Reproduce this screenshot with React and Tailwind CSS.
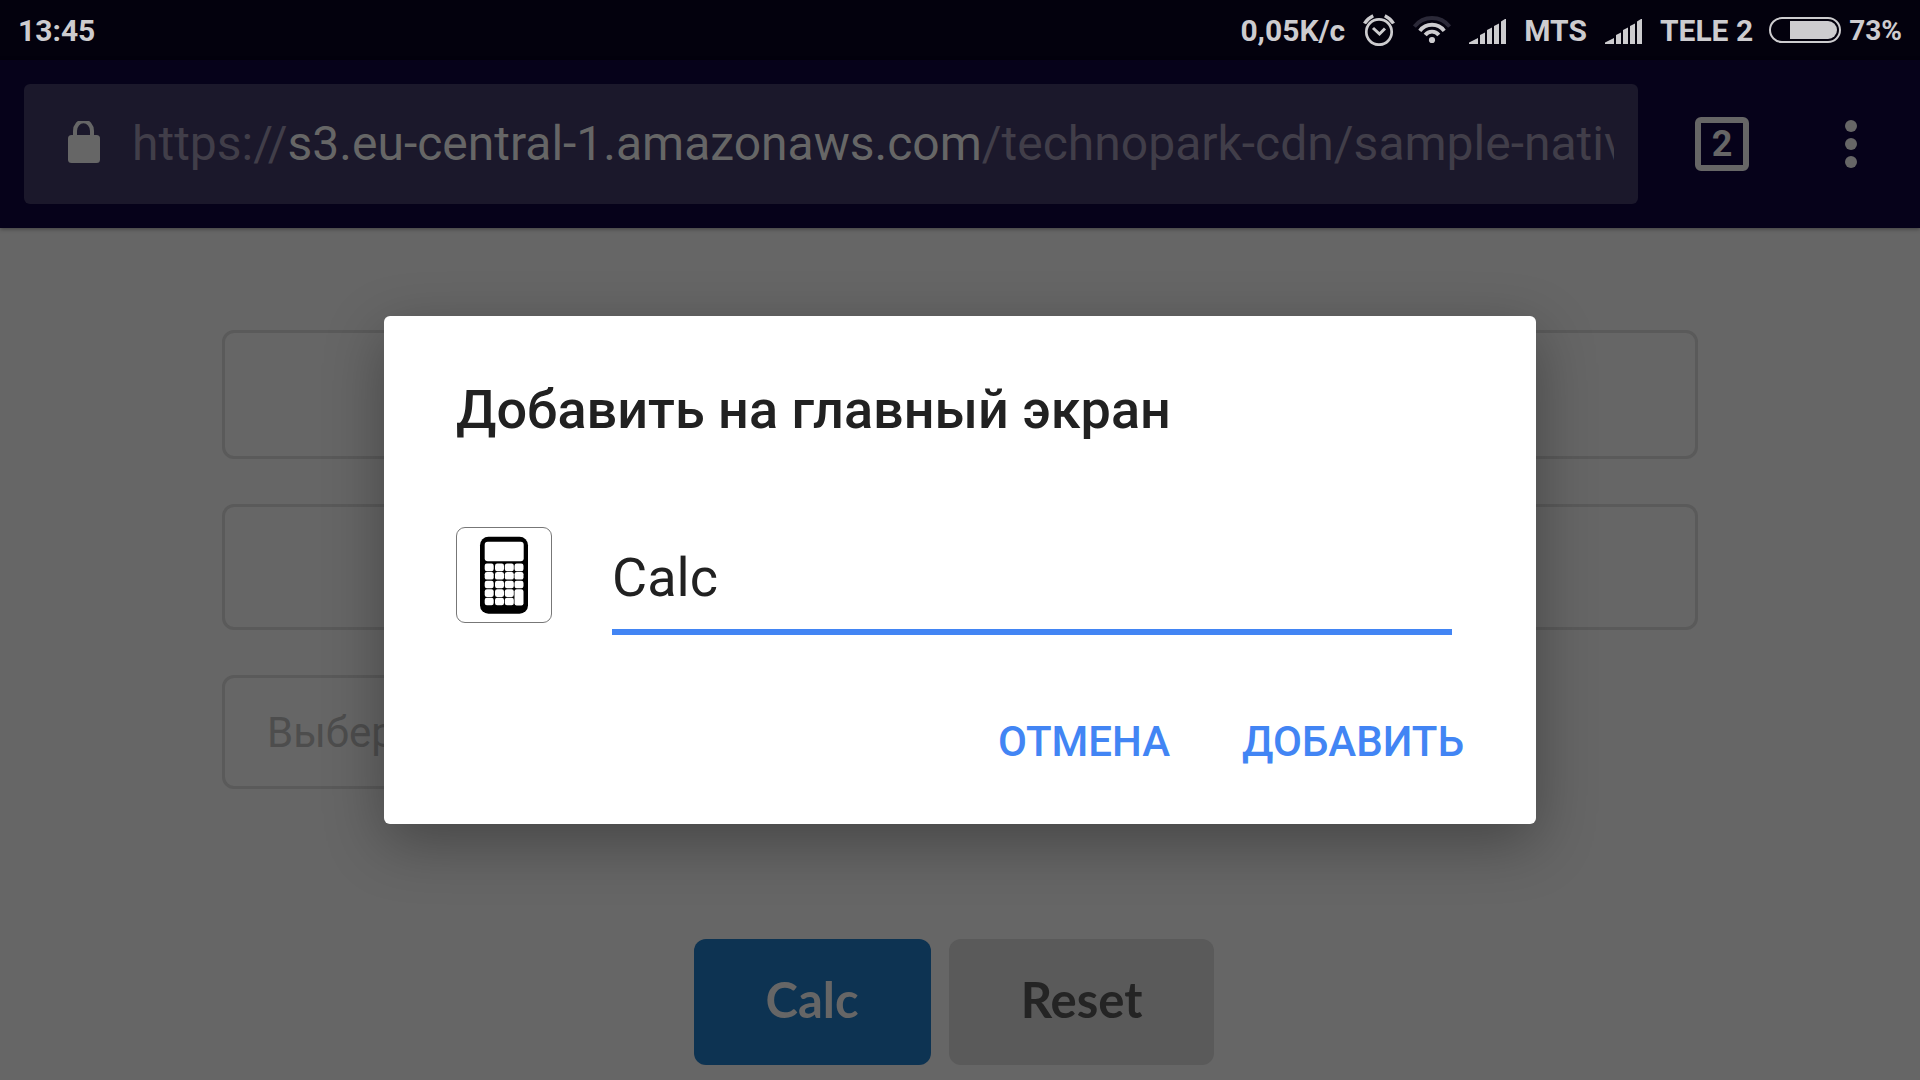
import React from 'react';

function AlarmIcon() {
  return (
    <svg className="h-8 w-8" viewBox="0 0 32 32" fill="none" stroke="#cdcccf" aria-hidden="true">
      <circle cx="16" cy="18" r="12.7" strokeWidth="2.7" />
      <path d="M10 14 16.5 20 22 14.5" strokeWidth="3" />
      <path d="M1.5 9.5Q4.5 4.5 10.2 1.7M30.5 9.5Q27.5 4.5 21.8 1.7" strokeWidth="3.4" />
    </svg>
  );
}

function WifiIcon() {
  return (
    <svg className="h-7 w-[38px]" viewBox="0 0 38 28" fill="none" strokeWidth="3.8" aria-hidden="true">
      <path d="M1.4 10.6A22.3 22.3 0 0 1 36.6 10.6" stroke="#2b2938" />
      <path d="M6.8 14.8A15.3 15.3 0 0 1 31.2 14.8" stroke="#cdcccf" />
      <path d="M12.2 19A8.6 8.6 0 0 1 25.8 19" stroke="#cdcccf" />
      <circle cx="19" cy="24" r="3.1" fill="#cdcccf" />
    </svg>
  );
}

function SignalIcon() {
  return (
    <svg className="h-[25px] w-[37px]" viewBox="0 0 37 25" fill="#cdcccf" aria-hidden="true">
      <path d="M0 25V23.5L9 19V25ZM11 25V16L16 13.5V25ZM18 25V11L23 8.5V25ZM25 25V7L30 4.5V25ZM32 25V2.5L36 0H37V25Z" />
    </svg>
  );
}

function BatteryIcon() {
  return (
    <svg className="h-[26px] w-[72px]" viewBox="0 0 72 26" aria-hidden="true">
      <rect x="1" y="1" width="70" height="24" rx="12" fill="none" stroke="#cdcccf" strokeWidth="2" />
      <path d="M21 4H59A9 9 0 0 1 59 22H21Z" fill="#cdcccf" />
    </svg>
  );
}

function LockIcon() {
  return (
    <svg className="mb-1 h-[42px] w-8 shrink-0" viewBox="0 0 32 42" aria-hidden="true">
      <rect x="0" y="14" width="32" height="28" rx="3.5" fill="#666" />
      <path d="M7 15V10A7 8 0 0 1 24 10V15" fill="none" stroke="#666" strokeWidth="4" />
    </svg>
  );
}

const keyColumns = [28.7, 39, 48.8, 58.5];
const keyRows = [36.6, 45, 53.7, 62.3, 70.7];

function CalculatorIcon() {
  return (
    <svg className="size-24 shrink-0" viewBox="0 0 96 96" aria-hidden="true">
      <rect x="0.5" y="0.5" width="95" height="95" rx="8.5" fill="#fff" stroke="#777" />
      <rect x="24" y="9.7" width="48" height="77" rx="8.5" />
      <rect x="28.7" y="14.7" width="39" height="19.6" rx="3" fill="#fff" />
      {keyRows.map((y, row) =>
        keyColumns.map((x, column) => {
          if (column === 3 && row === 4) return null;
          const tall = column === 3 && row === 3;
          return (
            <rect key={`${row}-${column}`} x={x} y={y} width="9" height={tall ? 16.2 : 7.6} rx="2.2" fill="#fff" />
          );
        })
      )}
    </svg>
  );
}

function StatusBar() {
  return (
    <header className="flex h-[60px] items-center justify-between bg-[#03010d] px-[18px] pt-0.5 text-[30px] leading-9 font-bold text-[#cdcccf]">
      <time>13:45</time>
      <div className="flex items-center">
        <span>0,05K/c</span>
        <span className="ml-[18px] flex pb-0.5"><AlarmIcon /></span>
        <span className="ml-[18px] flex pb-0.5"><WifiIcon /></span>
        <span className="ml-[18px] flex"><SignalIcon /></span>
        <span className="ml-[18px]">MTS</span>
        <span className="ml-[18px] flex"><SignalIcon /></span>
        <span className="ml-[18px]">TELE 2</span>
        <span className="ml-4 flex pb-0.5"><BatteryIcon /></span>
        <span className="ml-2 text-[28px]">73%</span>
      </div>
    </header>
  );
}

function Toolbar() {
  return (
    <nav className="flex h-[168px] items-center bg-[#06021a] pr-[51px] pl-6 shadow-[0_1px_4px_rgba(0,0,0,0.4)]">
      <div className="flex h-[120px] min-w-0 flex-1 items-center rounded-md bg-[#1b182b] pr-6 pl-11">
        <LockIcon />
        <div className="ml-8 min-w-0 flex-1 overflow-hidden text-[48px] leading-[60px] whitespace-nowrap text-[#413e49]">
          https://<span className="text-[#666]">s3.eu-central-1.amazonaws.com</span>/technopark-cdn/sample-nativ
        </div>
      </div>
      <button className="ml-[57px] flex size-[54px] items-center justify-center rounded-md border-6 border-[#666] text-[36px] leading-none font-bold text-[#666]">
        2
      </button>
      <button aria-label="Меню" className="ml-[84px] flex w-9 flex-col items-center gap-[6px]">
        <span className="size-3 rounded-full bg-[#666]" />
        <span className="size-3 rounded-full bg-[#666]" />
        <span className="size-3 rounded-full bg-[#666]" />
      </button>
    </nav>
  );
}

function CalculatorPage() {
  return (
    <main className="flex flex-1 flex-col px-[222px] pt-[102px]">
      <form className="flex flex-col" onSubmit={(event) => event.preventDefault()}>
        <input aria-label="Первое число" className="h-[129px] w-full rounded-xl border-3 border-[#5a5a5a]" />
        <input aria-label="Второе число" className="mt-[45px] h-[126px] w-full rounded-xl border-3 border-[#5a5a5a]" />
        <select
          aria-label="Операция"
          className="mt-[45px] h-[114px] w-1/2 appearance-none rounded-xl border-3 border-[#5a5a5a] px-[42px] text-[42px] text-[#4d4d4d]"
        >
          <option>Выберите</option>
        </select>
        <div className="mt-[150px] flex justify-center gap-[18px] pr-3 font-[Lato] text-[49px] leading-[60px] font-bold">
          <button className="h-[126px] rounded-xl bg-[#0d3352] px-[72px] pb-1.5 text-[#666]">Calc</button>
          <button type="reset" className="h-[126px] rounded-xl bg-[#5a5a5a] px-[72px] pb-1.5 text-[#242424]">Reset</button>
        </div>
      </form>
    </main>
  );
}

function AddToHomeDialog() {
  return (
    <div className="absolute inset-0 flex items-center justify-center pt-[60px]">
      <section
        role="dialog"
        aria-labelledby="dialog-title"
        className="w-3/5 rounded-md bg-white pt-[61px] pb-[46px] pl-[72px] text-[#212121] shadow-[0_18px_60px_rgba(0,0,0,0.32)]"
      >
        <h1 id="dialog-title" className="text-[54px] leading-[66px] font-medium">Добавить на главный экран</h1>
        <div className="mt-[84px] flex items-start gap-[60px] pr-[84px]">
          <CalculatorIcon />
          <input
            aria-label="Название"
            defaultValue="Calc"
            className="h-[108px] min-w-0 flex-1 border-b-6 border-[#4285f4] pb-0.5 text-[54px] outline-none"
          />
        </div>
        <div className="mt-[71px] flex justify-end gap-[72px] pr-[72px] text-[42px] leading-[72px] font-medium text-[#4285f4]">
          <button>ОТМЕНА</button>
          <button>ДОБАВИТЬ</button>
        </div>
      </section>
    </div>
  );
}

export default function App() {
  return (
    <div className="relative flex min-h-screen flex-col bg-[#666] font-[Roboto,sans-serif]">
      <StatusBar />
      <Toolbar />
      <CalculatorPage />
      <AddToHomeDialog />
    </div>
  );
}
